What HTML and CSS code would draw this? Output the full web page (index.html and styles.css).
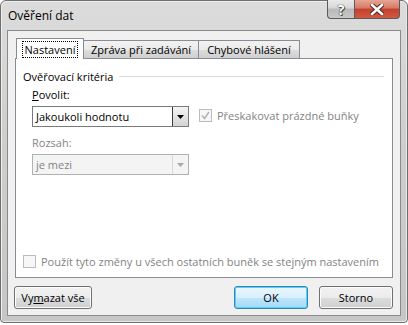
FILE: index.html
```html
<!DOCTYPE html>
<html lang="cs">
<head>
    <meta charset="UTF-8">
    <title>Ověření dat</title>
    <link rel="stylesheet" href="styles.css">
</head>
<body>
    <div class="window">
        <div class="titlebar">
            <span class="title">Ověření dat</span>
            <div class="caption-buttons">
                <div class="cbtn help">?</div>
                <div class="cbtn close">
                    <svg width="14" height="11" viewBox="0 0 14 11">
                        <path d="M2 1 L12 10 M12 1 L2 10" stroke="#4a2420" stroke-width="4.5" stroke-linecap="square"/>
                        <path d="M2 1 L12 10 M12 1 L2 10" stroke="#fff" stroke-width="2.6" stroke-linecap="square"/>
                    </svg>
                </div>
            </div>
        </div>
        <div class="client">
            <div class="tabs">
                <div class="tab active"><span class="focus">Nastavení</span></div>
                <div class="tab">Zpráva při zadávání</div>
                <div class="tab">Chybové hlášení</div>
            </div>
            <div class="panel">
                <div class="group-title">
                    <span>Ověřovací kritéria</span>
                    <span class="rule"></span>
                </div>
                <div class="fields">
                    <div class="field-col">
                        <div class="label"><u>P</u>ovolit:</div>
                        <div class="combo">
                            <span class="value">Jakoukoli hodnotu</span>
                            <span class="drop">
                                <svg width="7" height="4" viewBox="0 0 7 4"><path d="M0 0 H7 L3.5 4 Z" fill="#000"/></svg>
                            </span>
                        </div>
                        <div class="label disabled">Rozsah:</div>
                        <div class="combo disabled">
                            <span class="value">je mezi</span>
                            <span class="drop">
                                <svg width="7" height="4" viewBox="0 0 7 4"><path d="M0 0 H7 L3.5 4 Z" fill="#a8a8a8"/></svg>
                            </span>
                        </div>
                    </div>
                    <div class="check disabled skip">
                        <span class="box">
                            <svg width="9" height="9" viewBox="0 0 9 9"><path d="M1 4.5 L3.5 7.5 L8 1" fill="none" stroke="#b0b0b0" stroke-width="1.4"/></svg>
                        </span>
                        <span>Přeskakovat prázdné buňky</span>
                    </div>
                </div>
                <div class="check disabled apply">
                    <span class="box"></span>
                    <span>Použít tyto změny u všech ostatních buněk se stejným nastavením</span>
                </div>
            </div>
            <div class="buttons">
                <button class="btn clear">Vy<u>m</u>azat vše</button>
                <div class="btn-group">
                    <button class="btn default">OK</button>
                    <button class="btn">Storno</button>
                </div>
            </div>
        </div>
    </div>
</body>
</html>
```

FILE: styles.css
```css
body {
    margin: 0;
    background: #fff;
    font-family: "Open Sans", "Noto Sans", sans-serif;
    font-size: 11px;
    color: #000;
}

.window {
    width: 408px;
    height: 323px;
    box-sizing: border-box;
    border: 1px solid #6f6f6f;
    border-radius: 6px 6px 4px 4px;
    background: linear-gradient(to bottom, #dcdcdc 0%, #cfcfcf 40%, #c6c6c6 100%);
    box-shadow: inset 1px 1px 0 #efefef, inset -1px -1px 0 #e8e8e8;
    display: flex;
    flex-direction: column;
}

.titlebar {
    height: 29px;
    display: flex;
    justify-content: space-between;
    align-items: flex-start;
    padding: 0 7px 0 7px;
}

.title {
    margin-top: 6px;
    font-size: 12px;
}

.caption-buttons {
    display: flex;
    margin-top: -1px;
}

.cbtn {
    height: 19px;
    display: flex;
    justify-content: center;
    align-items: center;
    border: 1px solid #5b5b5b;
    border-top: none;
    box-sizing: border-box;
}

.help {
    width: 27px;
    border-radius: 0 0 0 4px;
    border-right: none;
    background: linear-gradient(to bottom, #e9e9e9 0%, #d6d6d6 45%, #b9b9b9 50%, #c8c8c8 100%);
    color: #fff;
    font-weight: bold;
    font-size: 14px;
    text-shadow: 0 0 1px #333, 0 0 1px #333, 1px 1px 0 #555;
}

.close {
    width: 46px;
    border-radius: 0 0 4px 0;
    background: linear-gradient(to bottom, #e6a593 0%, #d77a66 45%, #c4402c 50%, #d05a45 100%);
}

.client {
    flex: 1;
    margin: 0 6px 6px;
    border: 1px solid #8a8a8a;
    background: #f0f0f0;
    display: flex;
    flex-direction: column;
    padding: 7px 7px 0;
}

.tabs {
    display: flex;
    align-items: flex-end;
    padding-left: 1px;
    position: relative;
    z-index: 1;
}

.tab {
    height: 18px;
    box-sizing: border-box;
    border: 1px solid #898c95;
    border-left: none;
    border-bottom: none;
    background: linear-gradient(to bottom, #f2f2f2 0%, #ebebeb 50%, #dddddd 51%, #cfcfcf 100%);
    display: flex;
    align-items: center;
    justify-content: center;
    white-space: nowrap;
}

.tab.active {
    width: 68px;
    height: 21px;
    margin-bottom: -1px;
    border-left: 1px solid #898c95;
    background: #fff;
}

.tab:nth-child(2) {
    width: 115px;
}

.tab:nth-child(3) {
    width: 101px;
}

.focus {
    outline: 1px dotted #000;
    padding: 0 2px;
    line-height: 15px;
}

.panel {
    height: 220px;
    box-sizing: border-box;
    border: 1px solid #898c95;
    background: #fff;
    padding: 9px 7px 0;
    display: flex;
    flex-direction: column;
}

.group-title {
    display: flex;
    align-items: center;
    gap: 6px;
    height: 16px;
}

.rule {
    flex: 1;
    height: 1px;
    background: #dcdcdc;
    margin-right: 1px;
}

.fields {
    display: flex;
    gap: 10px;
    padding-left: 9px;
    margin-top: 3px;
}

.field-col {
    display: flex;
    flex-direction: column;
    width: 157px;
}

.label {
    height: 16px;
    line-height: 16px;
}

.label.disabled {
    margin-top: 8px;
}

.combo {
    height: 21px;
    box-sizing: border-box;
    border: 1px solid #7a7a7a;
    margin-top: 3px;
    display: flex;
    align-items: stretch;
    background: #fff;
}

.combo .value {
    flex: 1;
    padding-left: 3px;
    display: flex;
    align-items: center;
}

.combo .drop {
    width: 15px;
    border-left: 1px solid #3c3c3c;
    background: linear-gradient(to bottom, #f4f4f4 0%, #e4e4e4 50%, #d4d4d4 100%);
    display: flex;
    justify-content: center;
    align-items: center;
}

.combo.disabled {
    border-color: #adb2b5;
    background: #f4f4f4;
    color: #838383;
}

.combo.disabled .drop {
    border-left: 1px solid #d8d8d8;
    background: #f4f4f4;
}

.disabled {
    color: #838383;
}

.check {
    display: flex;
    align-items: center;
    gap: 5px;
}

.check .box {
    width: 13px;
    height: 13px;
    box-sizing: border-box;
    border: 1px solid #bcbcbc;
    background: #f7f7f7;
    display: flex;
    justify-content: center;
    align-items: center;
}

.check.skip {
    margin-top: 21px;
    height: 15px;
}

.check.apply {
    margin-top: auto;
    margin-bottom: 8px;
}

.buttons {
    display: flex;
    justify-content: space-between;
    padding-top: 8px;
    margin-left: -1px;
}

.btn-group {
    display: flex;
    gap: 11px;
}

.btn {
    height: 23px;
    font: inherit;
    color: #000;
    border: 1px solid #707070;
    border-radius: 3px;
    background: linear-gradient(to bottom, #f2f2f2 0%, #ebebeb 50%, #dddddd 51%, #cfcfcf 100%);
    box-shadow: inset 0 0 0 1px #fcfcfc;
    padding: 0;
}

.btn.clear {
    width: 78px;
}

.btn-group .btn {
    width: 74px;
}

.btn.default {
    border-color: #3c7fb1;
    box-shadow: inset 0 0 0 1px #48d7fd;
    background: linear-gradient(to bottom, #eaf6fd 0%, #d9f0fc 50%, #bee6fd 51%, #a7d9f5 100%);
}
```
